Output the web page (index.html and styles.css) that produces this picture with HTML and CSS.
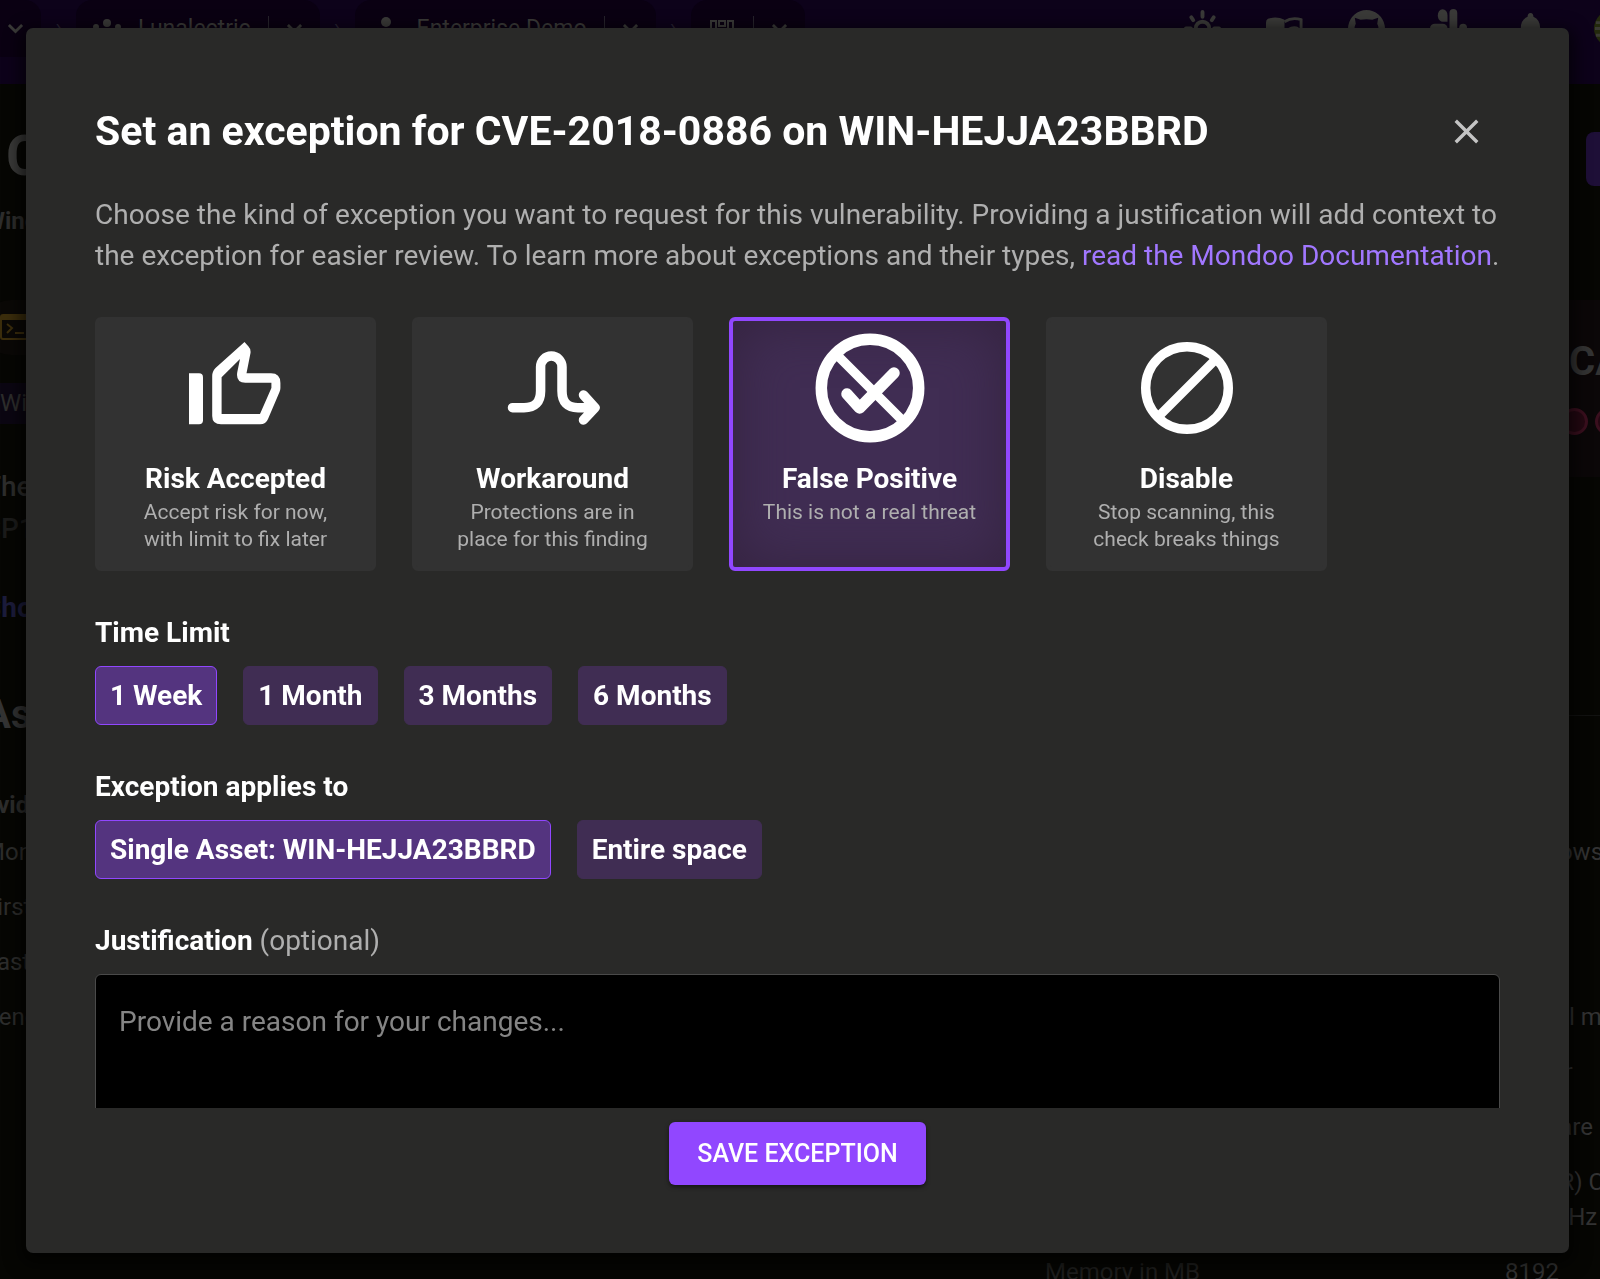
FILE: index.html
```html
<!DOCTYPE html>
<html lang="en">
<head>
<meta charset="utf-8">
<meta name="viewport" content="width=device-width, initial-scale=1">
<title>Set an exception</title>
<link rel="stylesheet" href="styles.css">
</head>
<body>
<div class="page" aria-hidden="true">
  <header class="topbar">
    <nav class="crumbs">
      <div class="crumb crumb-first">
        <svg class="chevron" viewBox="0 0 18 12"><path d="M2 2l7 7 7-7"/></svg>
      </div>
      <span class="crumb-arrow">›</span>
      <div class="crumb">
        <svg class="crumb-icon" viewBox="0 0 28 28"><circle cx="14" cy="8" r="4"/><circle cx="3" cy="12" r="3"/><circle cx="25" cy="12" r="3"/><path d="M6 24c0-10 16-10 16 0z"/></svg>
        <span class="crumb-name">Lunalectric</span>
        <span class="crumb-rule"></span>
        <svg class="chevron" viewBox="0 0 18 12"><path d="M2 2l7 7 7-7"/></svg>
      </div>
      <span class="crumb-arrow">›</span>
      <div class="crumb">
        <svg class="crumb-icon" viewBox="0 0 28 28"><circle cx="14" cy="7" r="5"/><path d="M4 26c0-14 20-14 20 0z"/></svg>
        <span class="crumb-name">Enterprise Demo</span>
        <span class="crumb-rule"></span>
        <svg class="chevron" viewBox="0 0 18 12"><path d="M2 2l7 7 7-7"/></svg>
      </div>
      <span class="crumb-arrow">›</span>
      <div class="crumb">
        <svg class="crumb-icon line" viewBox="0 0 28 28"><path d="M3 6h5v16H3zM11 6h6v5h-6zM20 6h5v16h-5zM11 15h6v7h-6z"/></svg>
        <span class="crumb-rule"></span>
        <svg class="chevron" viewBox="0 0 18 12"><path d="M2 2l7 7 7-7"/></svg>
      </div>
    </nav>
    <div class="tools">
      <svg class="tool" viewBox="0 0 40 40"><g fill="none" stroke="currentColor" stroke-width="4" stroke-linecap="round"><circle cx="20" cy="20" r="7"/><path d="M20 3v5M20 32v5M3 20h5M32 20h5M8.500 8.500l2 3M31.500 8.500l-2 3M8.500 31.500l2-3M31.500 31.500l-2-3"/></g></svg>
      <svg class="tool" viewBox="0 0 40 40"><path d="M1 14q0-3 2-4 9-3 17 1v26q-8-5-19-2z"/><path fill="none" stroke="currentColor" stroke-width="3" d="M20 13q8-5 17-2v24q-9-3-17 2M24 21q5-3 10-1M24 26q5-3 10-1"/></svg>
      <svg class="tool" viewBox="0 0 40 40"><path fill-rule="evenodd" d="M20 1a19 19 0 0 0-6 37v-6c-6 1-7-3-8-5 4 2 5 3 9 1-7-1-9-7-6-13l-1-6 6 2q6-1 12 0l6-2-1 6c3 6 1 12-6 13l1 10A19 19 0 0 0 20 1z"/></svg>
      <svg class="tool" viewBox="0 0 40 40"><path d="M19 13h-4a5 6.500 0 1 1 4-6z"/><rect x="21" y="0" width="8" height="28" rx="4"/><rect x="1" y="15" width="18" height="13" rx="5"/><rect x="31" y="15" width="8" height="13" rx="4"/></svg>
      <svg class="tool" viewBox="0 0 40 40"><path d="M20 4q3 0 3 4 7 3 7 12v10l4 4H6l4-4V20q0-9 7-12 0-4 3-4z"/></svg>
      <svg class="tool" viewBox="0 0 40 40"><circle cx="20" cy="20" r="19" fill="#23290c"/><path d="M3 14h34M2 20h36M3 27h34" stroke="#3a3a32" stroke-width="3"/></svg>
    </div>
  </header>
  <main class="asset">
    <section class="overview">
      <div class="summary">
        <h1 class="asset-name">CVE</h1>
        <p class="asset-os">Windows</p>
        <div class="terminal">
          <svg viewBox="0 0 40 26"><path fill="none" stroke="currentColor" stroke-width="2" d="M1 3q0-2 2-2h34v24H3q-2 0-2-2z"/><path d="M1 1h38v5H1z"/><path fill="none" stroke="currentColor" stroke-width="2" d="M7 10l5 4-5 5M15 19h9"/></svg>
        </div>
        <div class="tag">Windows</div>
        <p class="lede">The</p>
        <p class="lede faint">SP1</p>
        <p class="more">Show</p>
      </div>
      <div class="side">
        <div class="action"></div>
        <div class="score">
          <span class="score-name">CA</span>
          <span class="dots"><i class="dot"></i><i class="dot"></i></span>
        </div>
      </div>
    </section>
    <h2 class="section-title">Asset</h2>
    <section class="facts">
      <dl class="fact-list">
        <dt class="strong">Evidence</dt>
        <dt>Monitor</dt>
        <dt>First</dt>
        <dt>Last</dt>
        <dt>Vendor</dt>
      </dl>
      <dl class="fact-list fact-pairs">
        <dt></dt><dd></dd>
        <dt></dt><dd>Windows</dd>
        <dt></dt><dd></dd>
        <dt></dt><dd></dd>
        <dt></dt><dd>Virtual machine</dd>
        <dt></dt><dd>Server</dd>
        <dt></dt><dd>VMware</dd>
        <dt></dt><dd>Intel(R) CPU<br>2.40GHz</dd>
        <dt>Memory in MB</dt><dd>8192</dd>
      </dl>
    </section>
  </main>
</div>

<div class="backdrop">
  <section class="dialog" role="dialog" aria-modal="true" aria-labelledby="dialog-title">
    <header class="dialog-head">
      <h2 class="dialog-title" id="dialog-title">Set an exception for CVE-2018-0886 on WIN-HEJJA23BBRD</h2>
      <button class="close" type="button" aria-label="Close">
        <svg viewBox="0 0 24 24"><path d="M19 6.410L17.590 5 12 10.590 6.410 5 5 6.410 10.590 12 5 17.590 6.410 19 12 13.410 17.590 19 19 17.590 13.410 12z"/></svg>
      </button>
    </header>
    <div class="dialog-body">
      <p class="intro">Choose the kind of exception you want to request for this vulnerability. Providing a justification will add context to the exception for easier review. To learn more about exceptions and their types, <a href="#docs">read the Mondoo Documentation</a>.</p>

      <div class="kinds" role="group" aria-label="Exception type">
        <button class="kind" type="button" aria-pressed="false">
          <svg class="kind-icon" viewBox="-9 -10 120 120"><path fill="currentColor" fill-rule="evenodd" d="M59.500 4L63.500 8.500Q66 11 65.500 15L61.500 35.300H86Q95.400 35.300 95.400 45V50Q95.400 52 94.500 54L83 81Q81 86.300 75 86.300H36Q27.200 86.300 27.200 78V38Q27.200 33.500 30.500 30ZM36.600 39.300L55 21L52.300 34Q50.500 44.700 60.300 44.700H86.400V50L75 76H36.600Z"/><path fill="currentColor" d="M4 35.300h10q4 0 4 4v43q0 4-4 4H4z"/></svg>
          <span class="kind-name">Risk Accepted</span>
          <span class="kind-note">Accept risk for now,<br>with limit to fix later</span>
        </button>
        <button class="kind" type="button" aria-pressed="false">
          <svg class="kind-icon" viewBox="-8 -10 120 120"><path class="stroke" stroke-width="9.500" d="M11.500 69.700H23Q39.600 69.700 39.600 53V29A10.700 11 0 0 1 61 29V53Q61 69.700 77 69.700H92M82.500 57L94 69.700L82.500 82"/></svg>
          <span class="kind-name">Workaround</span>
          <span class="kind-note">Protections are in<br>place for this finding</span>
        </button>
        <button class="kind" type="button" aria-pressed="true">
          <svg class="kind-icon" viewBox="-10 -10 120 120"><circle class="stroke" stroke-width="11.500" cx="50" cy="50" r="48.700"/><path class="stroke" stroke-width="9.500" d="M17 17L83 83"/><path class="stroke" stroke-width="11.500" d="M27 56L39.600 70L74 35"/></svg>
          <span class="kind-name">False Positive</span>
          <span class="kind-note">This is not a real threat</span>
        </button>
        <button class="kind" type="button" aria-pressed="false">
          <svg class="kind-icon" viewBox="-10 -10 120 120"><circle class="stroke" stroke-width="9.400" cx="50" cy="50" r="41.300"/><path class="stroke" stroke-width="9" d="M78 22L22 78"/></svg>
          <span class="kind-name">Disable</span>
          <span class="kind-note">Stop scanning, this<br>check breaks things</span>
        </button>
      </div>

      <section class="field">
        <h3 class="field-name" id="limit">Time Limit</h3>
        <div class="chips" role="group" aria-labelledby="limit">
          <button class="chip" type="button" aria-pressed="true">1 Week</button>
          <button class="chip" type="button" aria-pressed="false">1 Month</button>
          <button class="chip" type="button" aria-pressed="false">3 Months</button>
          <button class="chip" type="button" aria-pressed="false">6 Months</button>
        </div>
      </section>

      <section class="field">
        <h3 class="field-name" id="scope">Exception applies to</h3>
        <div class="chips" role="group" aria-labelledby="scope">
          <button class="chip" type="button" aria-pressed="true">Single Asset: WIN-HEJJA23BBRD</button>
          <button class="chip" type="button" aria-pressed="false">Entire space</button>
        </div>
      </section>

      <div class="field">
        <label class="field-name" for="reason">Justification <span class="optional">(optional)</span></label>
        <textarea class="reason" id="reason" rows="5" placeholder="Provide a reason for your changes..."></textarea>
      </div>
    </div>
    <footer class="dialog-foot">
      <button class="save" type="button">SAVE EXCEPTION</button>
    </footer>
  </section>
</div>
</body>
</html>
```
FILE: styles.css
```css
* { box-sizing: border-box; }

html, body { height: 100%; }

body {
  margin: 0;
  overflow: hidden;
  background: #060603;
  color: #fff;
  font-family: Roboto, "Liberation Sans", sans-serif;
  font-size: 28px;
  line-height: 41px;
}

h1, h2, h3, p, dl, dd { margin: 0; }
button, textarea { font: inherit; color: inherit; }
button { border: 0; cursor: pointer; }

/* Dimmed page behind the dialog */
.page {
  height: 100%;
  overflow: hidden;
  color: #2d2d2c;
  font-size: 24px;
  line-height: 35px;
}

.topbar {
  display: flex;
  justify-content: space-between;
  height: 84px;
  background: #0d021a;
  color: #3a3a38;
  overflow: hidden;
}

.crumbs { display: flex; font-size: 23px; }
.crumb {
  display: flex;
  align-items: center;
  gap: 17px;
  height: 57px;
  padding: 0 17px;
  border-radius: 16px;
  background: #0a0012;
}
.crumb-first { padding-left: 7px; border-radius: 0 16px 16px 0; }
.crumb-arrow { width: 35px; font-size: 20px; line-height: 54px; text-align: center; color: #2a2433; }
.crumb-icon { width: 28px; fill: currentColor; }
.crumb-icon.line { fill: none; stroke: currentColor; stroke-width: 2; }
.crumb-rule { width: 1px; height: 26px; background: #26232b; }
.chevron { width: 17px; fill: none; stroke: currentColor; stroke-width: 3; }

.tools { display: flex; gap: 43px; margin-right: -32px; padding-top: 9px; }
.tool { width: 39px; height: 39px; flex: none; fill: currentColor; }

.asset { margin-left: -16px; }
.overview { display: flex; justify-content: space-between; height: 594px; }
.summary { display: flex; flex-direction: column; align-items: flex-start; }
.asset-name { padding: 37px 0 0 22px; font-size: 56px; line-height: 70px; color: #393938; }
.asset-os { padding-top: 12px; font-weight: 700; line-height: 36px; }
.terminal {
  margin: 61px 0 28px;
  padding: 14px 16px 15px;
  border-radius: 27px;
  background: #0a0806;
  color: #3b2d0c;
}
.terminal svg { display: block; width: 40px; fill: currentColor; }
.tag { margin-bottom: 42px; padding: 3px 16px; background: #0b0612; }
.lede { font-size: 28px; line-height: 42px; font-weight: 500; }
.faint { color: #1b1b1a; }
.more { padding-top: 37px; font-size: 28px; line-height: 42px; font-weight: 700; color: #1c1c3b; }
.side { display: flex; flex-direction: column; align-items: flex-end; padding-top: 48px; }
.action { width: 14px; height: 54px; border-radius: 8px 0 0 8px; background: #1e0f37; }
.score {
  display: flex;
  flex-direction: column;
  gap: 23px;
  width: 159px;
  margin-top: 114px;
  padding: 39px 0 42px 128px;
  overflow: hidden;
  background: #0b0708;
}
.score-name { font-size: 40px; line-height: 46px; font-weight: 700; color: #333; }
.dots { display: flex; gap: 7px; margin-left: -8px; }
.dot { flex: none; width: 27px; height: 27px; border: 3px solid #3a0f1e; border-radius: 50%; background: #240812; }
.section-title {
  display: flex;
  align-items: center;
  gap: 40px;
  font-size: 40px;
  line-height: 74px;
  color: #333;
}
.section-title::after { content: ""; flex: 1; height: 1px; background: #121211; }
.facts { display: grid; grid-template-columns: 1fr 555px; padding-top: 26px; }
.fact-list { display: grid; grid-template-rows: 47px; grid-auto-rows: minmax(55px, auto); align-content: start; }
.fact-list dt, .fact-list dd { padding-top: 10px; padding-bottom: 10px; }
.strong { font-weight: 700; }
.fact-pairs { grid-template-columns: 460px 1fr; white-space: nowrap; }
.fact-pairs dt { color: #1e1e1d; }
.fact-pairs dd { color: #333; }

/* Dialog */
.backdrop {
  position: fixed;
  inset: 0;
  display: flex;
  padding: 28px 31px 26px 26px;
}
.dialog {
  flex: 1;
  display: flex;
  flex-direction: column;
  min-width: 0;
  padding: 69px 69px 68px;
  border-radius: 7px;
  background: #292928;
  box-shadow: 0 6px 16px 6px rgba(0, 0, 0, .6);
}
.dialog-head { display: flex; align-items: center; justify-content: space-between; }
.dialog-title { font-size: 41px; line-height: 68px; font-weight: 700; }
.close { display: grid; place-items: center; width: 68px; height: 68px; padding: 0; background: none; color: #c4c4c4; }
.close svg { width: 41px; fill: currentColor; }

.dialog-body {
  flex: 1;
  display: flex;
  flex-direction: column;
  gap: 41px;
  min-height: 0;
  padding-top: 29px;
  overflow: hidden;
}
.intro { color: #afafaf; }
.intro a { color: #a177ff; text-decoration: none; }

.kinds { display: flex; flex-wrap: wrap; gap: 36px; }
.kind {
  display: flex;
  flex-direction: column;
  align-items: center;
  width: 281px;
  min-height: 254px;
  padding: 7px 0 12px;
  border: 4px solid #323232;
  border-radius: 6px;
  background: #323232;
}
.kind[aria-pressed="true"] {
  border-color: #9147ff;
  background: #402d53;
  box-shadow: inset 0 0 56px #34233f;
}
.kind-icon { width: 120px; height: 120px; }
.stroke { fill: none; stroke: currentColor; stroke-linecap: round; stroke-linejoin: round; }
.kind-name { margin-top: 10px; font-weight: 700; }
.kind-note { font-size: 21px; line-height: 27px; color: #afafaf; }

.field { display: flex; flex-direction: column; gap: 13px; }
.field-name { font-size: 28px; line-height: 41px; font-weight: 700; }
.optional { font-weight: 400; color: #afafaf; }
.chips { display: flex; flex-wrap: wrap; gap: 26px; }
.chip {
  padding: 8px 14px;
  border: 1px solid #402d53;
  border-radius: 6px;
  background: #402d53;
  font-weight: 700;
}
.chip[aria-pressed="true"] { border-color: #9147ff; background: #54347f; }
.reason {
  display: block;
  width: 100%;
  padding: 26px 23px;
  border: 1px solid #4a4a4a;
  border-radius: 6px;
  background: #000;
  resize: none;
}
.reason::placeholder { color: #858585; opacity: 1; }

.dialog-foot { display: flex; justify-content: center; padding-top: 14px; }
.save {
  padding: 11px 28px;
  border-radius: 6px;
  background: #9147ff;
  box-shadow: 0 2px 4px rgba(0, 0, 0, .5);
  font-size: 25px;
  font-weight: 500;
}
```
